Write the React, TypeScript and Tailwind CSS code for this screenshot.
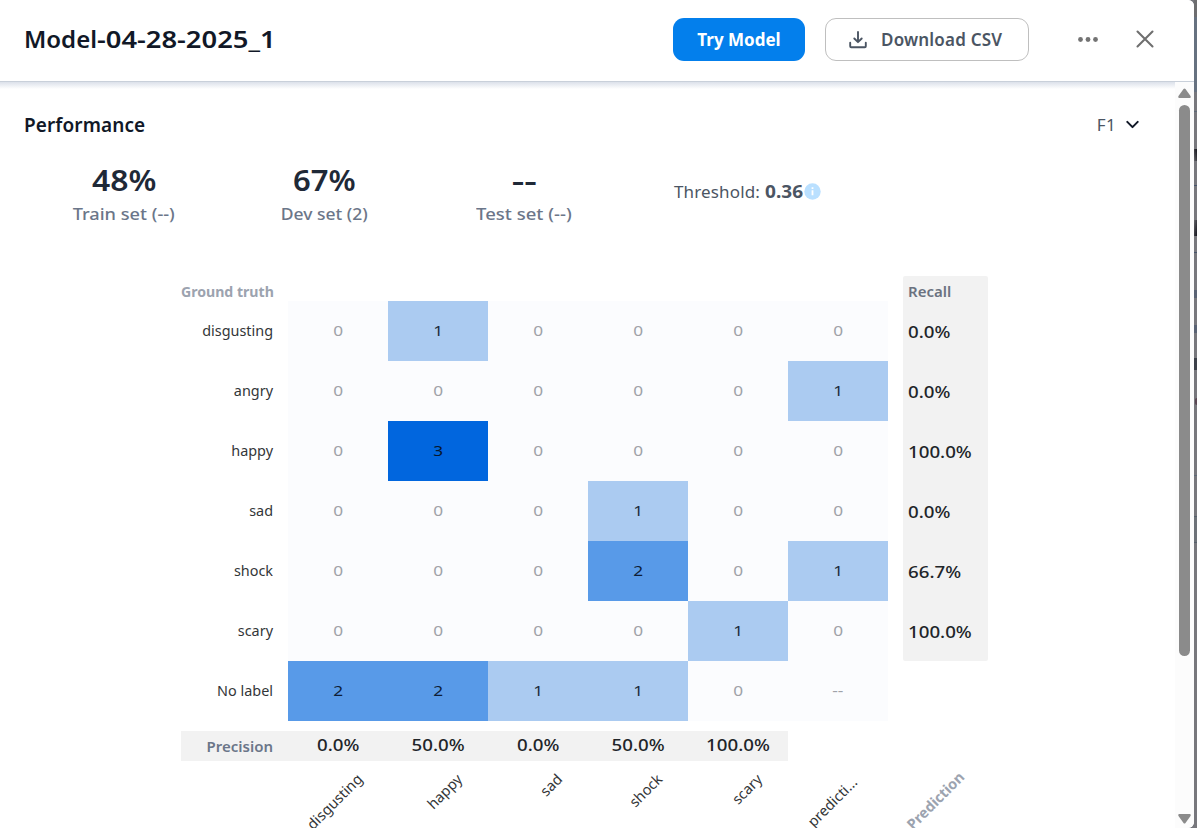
import React from "react";

const LABELS = ["disgusting", "angry", "happy", "sad", "shock", "scary", "No label"];

const MATRIX: (number | null)[][] = [
  [0, 1, 0, 0, 0, 0],
  [0, 0, 0, 0, 0, 1],
  [0, 3, 0, 0, 0, 0],
  [0, 0, 0, 1, 0, 0],
  [0, 0, 0, 2, 0, 1],
  [0, 0, 0, 0, 1, 0],
  [2, 2, 1, 1, 0, null],
];

const RECALL = ["0.0%", "0.0%", "100.0%", "0.0%", "66.7%", "100.0%"];
const PRECISION = ["0.0%", "50.0%", "0.0%", "50.0%", "100.0%"];
const AXIS = ["disgusting", "happy", "sad", "shock", "scary"];

const SHADES = [
  "bg-[#fbfcfe] text-[#9fa2a8]",
  "bg-[#abcbf1] text-[#1d2c40]",
  "bg-[#589ae8] text-[#0f1f38]",
  "bg-[#0166de] text-[#06172e]",
];

const STATS = [
  { value: "48%", label: "Train set (--)", wide: "scale-x-110", fit: "scale-x-107" },
  { value: "67%", label: "Dev set (2)", wide: "scale-x-107", fit: "scale-x-103" },
  { value: "--", label: "Test set (--)", wide: "scale-x-135", fit: "scale-x-109" },
];

function Header() {
  return (
    <header className="relative z-10 flex h-[82px] shrink-0 items-start border-b border-[#c9d0da] bg-white pl-6 pt-[18px]">
      <h1 className="h-[43px] flex-1 whitespace-nowrap text-[24px] font-semibold leading-[42px] text-[#111827]">
        Model<span className="inline-block origin-left scale-x-114">-04-28-2025_1</span>
      </h1>
      <button className="h-[43px] w-[132px] rounded-[11px] bg-[#037fec] text-[17px] font-bold text-white">Try Model</button>
      <button className="ml-5 flex h-[43px] w-[204px] items-center rounded-[11px] border border-[#bfbfbf] pl-[23px] text-[17px] font-semibold tracking-[0.2px] text-[#4b5563]">
        <svg width="18" height="18" viewBox="0 0 18 18" fill="none" stroke="#4b5563" strokeWidth="1.9" strokeLinecap="round" strokeLinejoin="round">
          <path d="M9 1v10M5.3 7.5 9 11.2l3.7-3.7M1.2 11.8v3.4a1 1 0 0 0 1 1h13.6a1 1 0 0 0 1-1v-3.4" />
        </svg>
        <span className="ml-[14px] whitespace-nowrap">Download CSV</span>
      </button>
      <button className="ml-[49px] mt-[19px]">
        <svg width="20" height="5" viewBox="0 0 20 5" fill="#737373">
          <circle cx="2.5" cy="2.5" r="2.4" />
          <circle cx="10" cy="2.5" r="2.4" />
          <circle cx="17.5" cy="2.5" r="2.4" />
        </svg>
      </button>
      <button className="ml-[38px] mr-[40px] mt-3">
        <svg width="18" height="18" viewBox="0 0 18 18" stroke="#6f6f6f" strokeWidth="2.1" strokeLinecap="round">
          <path d="m1.5 1.5 15 15M16.5 1.5l-15 15" />
        </svg>
      </button>
    </header>
  );
}

function Stats() {
  return (
    <div className="flex h-[70px] pl-6">
      {STATS.map((s) => (
        <div key={s.label} className="flex w-[200px] flex-col items-center">
          <span className={"h-[40px] text-[29px] font-semibold leading-[40px] text-[#1f2937] " + s.wide}>{s.value}</span>
          <span className={"h-[26px] whitespace-nowrap text-[17px] font-medium leading-[27px] text-[#6b7689] " + s.fit}>{s.label}</span>
        </div>
      ))}
      <div className="ml-[50px] flex h-[63px] items-center text-[17px] text-[#4b5563]">
        <span className="tracking-[0.15px]">Threshold:&nbsp;</span>
        <span className="w-[39px] font-bold">
          <span className="inline-block origin-left scale-x-112">0.36</span>
        </span>
        <svg width="17" height="17" viewBox="0 0 17 17">
          <circle cx="8.5" cy="8.5" r="8.2" fill="#bae0ff" />
          <path d="M8.5 4.2v1.9M8.5 7.3v5" stroke="#fff" strokeWidth="1.8" />
        </svg>
      </div>
    </div>
  );
}

function Matrix() {
  return (
    <div className="flex flex-col pl-[181px] pt-[46px]">
      <div className="flex">
        <div className="flex w-[107px] flex-col pr-[15px] text-right text-[15px] text-[#333638]">
          <span className="h-[25px] origin-left scale-x-94 whitespace-nowrap font-bold leading-[31px] text-[#9ca3af]">Ground truth</span>
          {LABELS.map((l) => (
            <span key={l} className="h-[60px] origin-right scale-x-96 leading-[59px]">{l}</span>
          ))}
        </div>
        <div className="pt-[25px]">
          {MATRIX.map((row, r) => (
            <div key={r} className="flex">
              {row.map((v, c) => (
                <span key={c} className={"h-[60px] w-[100px] text-center text-[15px] leading-[59px] " + SHADES[v ?? 0]}>
                  <span className="inline-block scale-x-115">{v ?? "--"}</span>
                </span>
              ))}
            </div>
          ))}
        </div>
        <div className="ml-[15px] flex h-[385px] w-[85px] flex-col rounded-[2px] bg-[#f2f2f2] pl-[5px] text-[17px] font-medium text-[#212529]">
          <span className="h-[25px] text-[15px] font-semibold leading-[31px] text-[#6b7280]">Recall</span>
          {RECALL.map((v, i) => (
            <span key={i} className="h-[60px] leading-[61px]">
              <span className="inline-block origin-left scale-x-110">{v}</span>
            </span>
          ))}
        </div>
      </div>
      <div className="mt-[10px] flex h-[30px] w-[607px] bg-[#f2f2f2] text-[17px] font-medium text-[#212529]">
        <span className="w-[107px] pr-[15px] text-right text-[15px] font-semibold leading-[31px] text-[#6b7689]">Precision</span>
        {PRECISION.map((v, i) => (
          <span key={i} className="w-[100px] text-center leading-[28px]">
            <span className="inline-block scale-x-110">{v}</span>
          </span>
        ))}
      </div>
      <div className="flex pl-[107px] pt-[3px] text-[14.5px] text-[#333638]">
        {AXIS.map((l) => (
          <div key={l} className="w-[100px]">
            <span className="block h-6 w-[71px] origin-right -rotate-45 whitespace-nowrap text-right leading-6">{l}</span>
          </div>
        ))}
        <div className="w-[100px] pt-[3px]">
          <span className="block h-6 w-[66px] origin-right -rotate-45 whitespace-nowrap text-right leading-6">predicti...</span>
        </div>
        <span className="block h-6 w-[71px] origin-right -rotate-45 text-right font-bold leading-6 text-[#9ca3af]">Prediction</span>
      </div>
    </div>
  );
}

function Scrollbar() {
  return (
    <div className="flex w-[19px] shrink-0 flex-col items-center bg-[#fcfcfc] pt-[6px]">
      <svg className="shrink-0" width="13" height="10" viewBox="0 0 13 10" fill="#8b8b8b">
        <path d="M5.5 1Q6.5-.2 7.5 1l5 7q.7 2-.7 2H1.2q-1.4 0-.7-2Z" />
      </svg>
      <div className="mt-[7px] h-[551px] w-[11px] shrink-0 rounded-full bg-[#8b8b8b]" />
      <svg className="mt-[158px] shrink-0" width="13" height="10" viewBox="0 0 13 10" fill="#8b8b8b">
        <path d="M5.5 9q1 1.2 2 0l5-7q.7-2-.7-2H1.2q-1.4 0-.7 2Z" />
      </svg>
    </div>
  );
}

export default function App() {
  return (
    <div className="flex h-[828px] w-[1197px] overflow-hidden bg-[#76777d] font-['Noto_Sans',sans-serif]">
      <div className="flex w-[1194px] shrink-0 flex-col overflow-hidden rounded-r-[6px] bg-white">
        <Header />
        <div className="flex h-[746px]">
          <main className="min-w-0 flex-1 overflow-hidden">
            <div className="h-[7px] bg-linear-to-b from-[#dce1ea] to-white" />
            <div className="flex h-[71px] items-center justify-between pl-6 pr-9">
              <h2 className="pt-px text-[19px] font-semibold tracking-[0.1px] text-[#111827]">Performance</h2>
              <button className="flex items-center text-[17px] tracking-[0.3px] text-[#4b5563]">
                F1
                <svg className="ml-[10px]" width="13" height="9" viewBox="0 0 13 9" fill="none" stroke="#111827" strokeWidth="2" strokeLinecap="round" strokeLinejoin="round">
                  <path d="m1.3 1.9 5.2 5.2 5.2-5.2" />
                </svg>
              </button>
            </div>
            <Stats />
            <Matrix />
          </main>
          <Scrollbar />
        </div>
      </div>
      <div className="flex w-[3px] flex-col bg-[#77777c]">
        <div className="h-[17px] bg-[#6d6d6f]" />
        <div className="h-[75px] bg-[#667180]" />
        <div className="h-[20px] border-b border-[#5d6976]" />
        <div className="mt-[37px] h-[12px] bg-linear-to-bl from-[#15151c] to-[#68686d]" />
        <div className="mt-[24px] h-px bg-[#46546a]" />
        <div className="mt-[34px] h-[16px] bg-linear-to-tl from-[#15151c] to-[#68686d]" />
        <div className="mt-[16px] h-px bg-[#46546a]" />
        <div className="mt-[37px] h-[8px] bg-[#596273]" />
        <div className="mt-[27px] h-[8px] bg-[#596273]" />
        <div className="mt-[25px] h-[12px] bg-[#3c4049]" />
        <div className="mt-[28px] ml-[1px] h-[7px] rounded-l-full bg-[#5a4652]" />
        <div className="mt-[70px] h-px bg-[#5d6976]" />
        <div className="mt-[40px] h-[27px] border-y border-[#56606b] bg-[#6d7278]" />
      </div>
    </div>
  );
}
